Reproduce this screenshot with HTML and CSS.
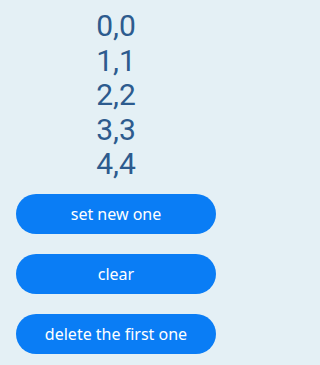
FILE: index.html
```html
<!DOCTYPE html>
<html>
<head>
<meta charset="utf-8">
<link rel="stylesheet" href="styles.css">
</head>
<body>
<div class="page">
  <div class="list">
    <div class="item">0,0</div>
    <div class="item">1,1</div>
    <div class="item">2,2</div>
    <div class="item">3,3</div>
    <div class="item">4,4</div>
  </div>
  <div class="actions">
    <button class="btn">set new one</button>
    <button class="btn">clear</button>
    <button class="btn">delete the first one</button>
  </div>
</div>
</body>
</html>
```
FILE: styles.css
```css
html, body {
  margin: 0;
  padding: 0;
  background: #e4f0f5;
}
.page {
  width: 232px;
  height: 365px;
  display: flex;
  flex-direction: column;
  align-items: center;
  padding-top: 9px;
  box-sizing: border-box;
  font-family: Roboto, "Noto Sans", sans-serif;
}
.list {
  display: flex;
  flex-direction: column;
  align-items: center;
}
.item {
  font-size: 30px;
  line-height: 34.5px;
  color: #2d5b8e;
}
.actions {
  display: flex;
  flex-direction: column;
  gap: 20px;
  margin-top: 12px;
}
.btn {
  width: 200px;
  height: 40px;
  border: none;
  border-radius: 20px;
  background: #0a7df5;
  color: #ffffff;
  font-family: "Noto Sans", Roboto, sans-serif;
  font-size: 16px;
  padding: 0;
}
```
